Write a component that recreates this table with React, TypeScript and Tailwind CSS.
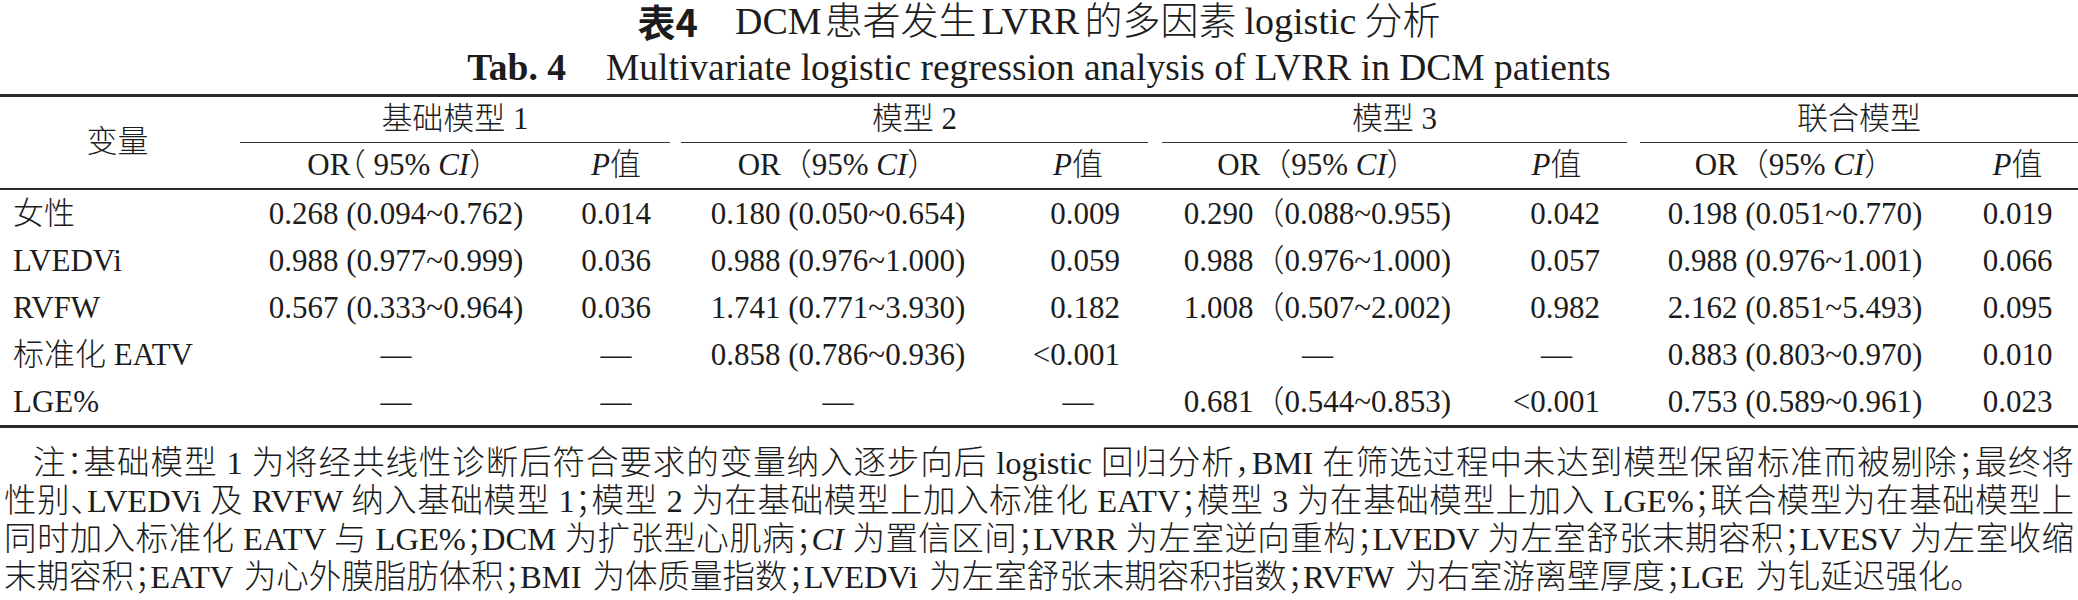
import React from "react";

const serif = "font-['Liberation_Serif','Noto_Sans_CJK_SC',serif]";
const cols = "grid grid-cols-[235px_322px_118px_326px_154px_325px_153px_324px_121px]";

type Row = { name: React.ReactNode; v: string[] };

const rows: Row[] = [
  {
    name: "女性",
    v: ["0.268 (0.094~0.762)", "0.014", "0.180 (0.050~0.654)", "0.009", "0.290（0.088~0.955)", "0.042", "0.198 (0.051~0.770)", "0.019"],
  },
  {
    name: "LVEDVi",
    v: ["0.988 (0.977~0.999)", "0.036", "0.988 (0.976~1.000)", "0.059", "0.988（0.976~1.000)", "0.057", "0.988 (0.976~1.001)", "0.066"],
  },
  {
    name: "RVFW",
    v: ["0.567 (0.333~0.964)", "0.036", "1.741 (0.771~3.930)", "0.182", "1.008（0.507~2.002)", "0.982", "2.162 (0.851~5.493)", "0.095"],
  },
  {
    name: "标准化 EATV",
    v: ["—", "—", "0.858 (0.786~0.936)", "<0.001", "—", "—", "0.883 (0.803~0.970)", "0.010"],
  },
  {
    name: "LGE%",
    v: ["—", "—", "—", "—", "0.681（0.544~0.853)", "<0.001", "0.753 (0.589~0.961)", "0.023"],
  },
];

function cellClass(i: number, val: string): string {
  if (val === "—") return "text-center";
  if (i === 3) return "text-right pr-[35px]";
  if (i === 5) return "text-right pr-[33px]";
  return "text-center";
}

function ORHead({ first }: { first?: boolean }) {
  return first ? (
    <span className="[font-feature-settings:'halt']">
      OR（ 95% <i>CI</i>）
    </span>
  ) : (
    <span>
      OR（95% <i>CI</i>）
    </span>
  );
}

function PHead() {
  return (
    <span>
      <i>P</i>值
    </span>
  );
}

export default function App() {
  return (
    <div className={`w-[2078px] h-[600px] overflow-hidden bg-white text-[#1c1c1c] font-light ${serif}`}>
      {/* Titles */}
      <div className="h-[42px] flex items-center justify-center text-[38px] leading-[42px]">
        <span className="font-['Noto_Sans_CJK_SC',sans-serif] font-bold">表4</span>
        <span className="ml-[37px]">DCM</span>
        <span className="ml-[3px]">患者发生</span>
        <span className="ml-[5px]">LVRR</span>
        <span className="ml-[5px]">的多因素</span>
        <span className="ml-[8px]">logistic</span>
        <span className="ml-[8px]">分析</span>
      </div>
      <div className="h-[52px] flex items-center justify-center text-[37.5px] leading-[52px]">
        <span className="font-bold">Tab. 4</span>
        <span className="ml-[40px]">Multivariate logistic regression analysis of LVRR in DCM patients</span>
      </div>

      {/* Table */}
      <div className="border-t-[3px] border-[#2a2a2a] text-[31px]">
        <div className={`${cols} grid-rows-[46px_45px] border-b-2 border-[#2a2a2a]`}>
          <div className="row-span-2 flex items-center justify-center">变量</div>
          <div className="col-span-2 ml-[5px] mr-[5px] flex items-center justify-center border-b-[1.5px] border-[#333]">
            基础模型 1
          </div>
          <div className="col-span-2 ml-[6px] mr-[7px] flex items-center justify-center border-b-[1.5px] border-[#333]">
            模型 2
          </div>
          <div className="col-span-2 ml-[7px] mr-[6px] flex items-center justify-center border-b-[1.5px] border-[#333]">
            模型 3
          </div>
          <div className="col-span-2 ml-[7px] flex items-center justify-center border-b-[1.5px] border-[#333]">
            联合模型
          </div>
          <div className="flex items-center justify-center">
            <ORHead first />
          </div>
          <div className="flex items-center justify-center">
            <PHead />
          </div>
          <div className="flex items-center justify-center">
            <ORHead />
          </div>
          <div className="flex items-center justify-center">
            <PHead />
          </div>
          <div className="flex items-center justify-center">
            <ORHead />
          </div>
          <div className="flex items-center justify-center">
            <PHead />
          </div>
          <div className="flex items-center justify-center">
            <ORHead />
          </div>
          <div className="flex items-center justify-center">
            <PHead />
          </div>
        </div>

        <div className="border-b-[3px] border-[#2a2a2a]">
          {rows.map((r, ri) => (
            <div key={ri} className={`${cols} h-[47px] items-center leading-[47px]`}>
              <div className="pl-[13px] whitespace-nowrap">{r.name}</div>
              {r.v.map((val, i) => (
                <div key={i} className={`whitespace-nowrap ${cellClass(i, val)}`}>
                  {val}
                </div>
              ))}
            </div>
          ))}
        </div>
      </div>

      {/* Notes */}
      <div className="pt-[16px] px-[4px] text-[32.5px] leading-[38px] [font-feature-settings:'halt']">
        <div className="pl-[29px] text-justify [text-align-last:justify]">
          注：基础模型 1 为将经共线性诊断后符合要求的变量纳入逐步向后 logistic 回归分析，BMI 在筛选过程中未达到模型保留标准而被剔除；最终将
        </div>
        <div className="text-justify [text-align-last:justify]">
          性别、LVEDVi 及 RVFW 纳入基础模型 1；模型 2 为在基础模型上加入标准化 EATV；模型 3 为在基础模型上加入 LGE%；联合模型为在基础模型上
        </div>
        <div className="text-justify [text-align-last:justify]">
          同时加入标准化 EATV 与 LGE%；DCM 为扩张型心肌病；<i>CI</i> 为置信区间；LVRR 为左室逆向重构；LVEDV 为左室舒张末期容积；LVESV 为左室收缩
        </div>
        <div className="text-left [word-spacing:3px]">
          末期容积；EATV 为心外膜脂肪体积；BMI 为体质量指数；LVEDVi 为左室舒张末期容积指数；RVFW 为右室游离壁厚度；LGE 为钆延迟强化。
        </div>
      </div>
    </div>
  );
}
